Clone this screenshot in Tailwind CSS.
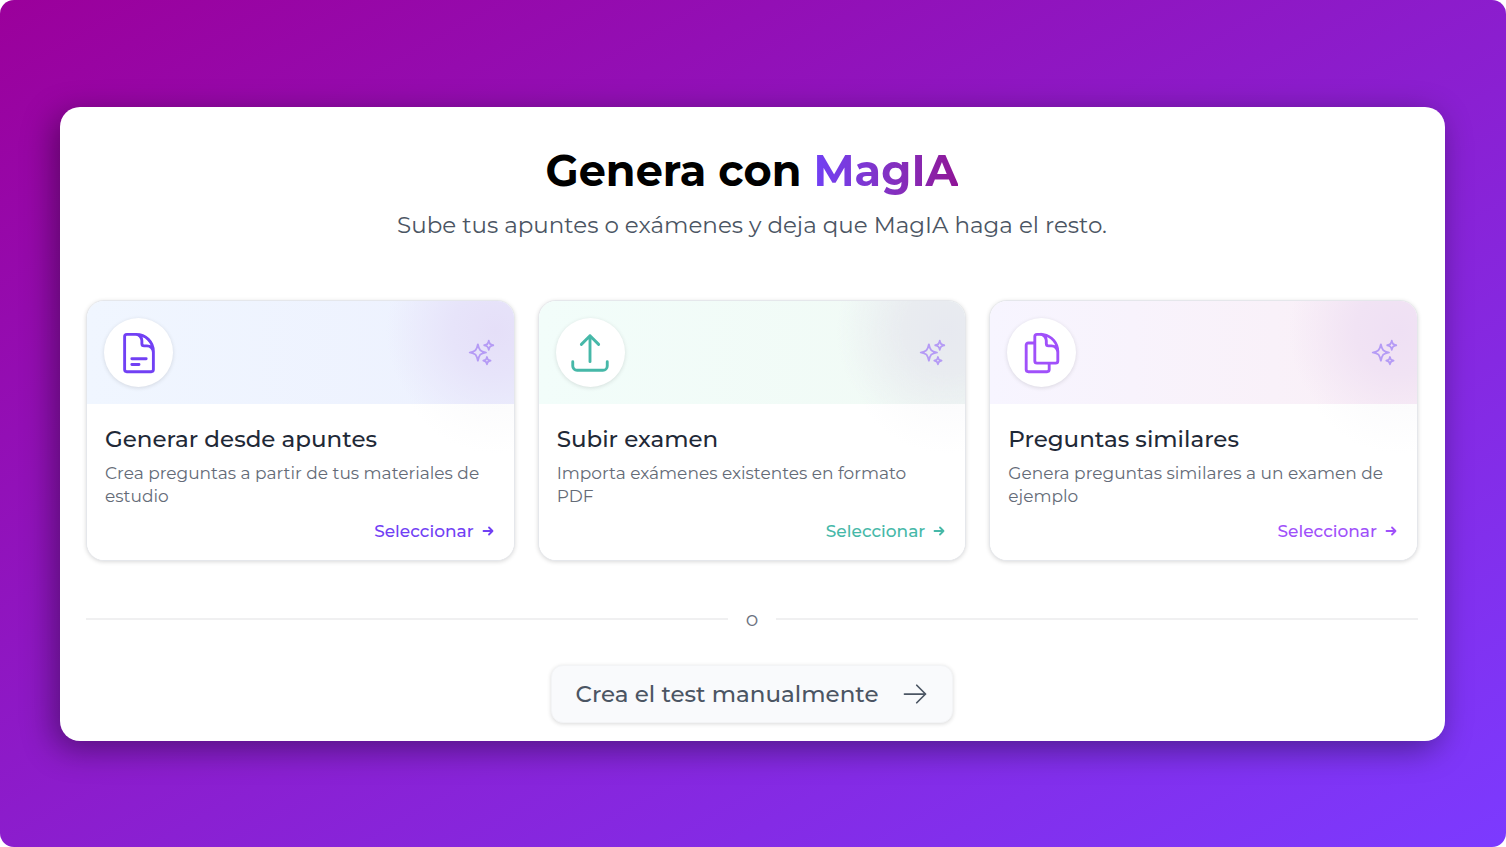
<!DOCTYPE html>
<html lang="es">
<head>
<meta charset="utf-8">
<meta name="viewport" content="width=device-width, initial-scale=1">
<title>Genera con MagIA</title>
<script src="https://cdn.jsdelivr.net/npm/@tailwindcss/browser@4"></script>
</head>
<body class="bg-white font-[Montserrat,Inter,sans-serif]">
<svg class="hidden" aria-hidden="true">
  <symbol id="sparkles" viewBox="0 0 24 24"><path d="M9.813 15.904 9 18.75l-.813-2.846a4.5 4.5 0 0 0-3.09-3.09L2.25 12l2.846-.813a4.5 4.5 0 0 0 3.09-3.09L9 5.25l.813 2.846a4.5 4.5 0 0 0 3.09 3.09L15.75 12l-2.846.813a4.5 4.5 0 0 0-3.09 3.09ZM18.259 8.715 18 9.75l-.259-1.035a3.375 3.375 0 0 0-2.455-2.456L14.25 6l1.036-.259a3.375 3.375 0 0 0 2.455-2.456L18 2.25l.259 1.035a3.375 3.375 0 0 0 2.456 2.456L21.75 6l-1.035.259a3.375 3.375 0 0 0-2.456 2.456ZM16.894 20.567 16.5 21.75l-.394-1.183a2.25 2.25 0 0 0-1.423-1.423L13.5 18.75l1.183-.394a2.25 2.25 0 0 0 1.423-1.423l.394-1.183.394 1.183a2.25 2.25 0 0 0 1.423 1.423l1.183.394-1.183.394a2.25 2.25 0 0 0-1.423 1.423Z"/></symbol>
  <symbol id="arrow" viewBox="0 0 24 24"><path d="M13.5 4.5 21 12m0 0-7.5 7.5M21 12H3"/></symbol>
  <symbol id="short-arrow" viewBox="0 0 12 12"><path d="M1.500 6h9M7 2.500 10.500 6 7 9.500"/></symbol>
</svg>
<div class="flex min-h-screen items-center rounded-[14px] bg-[linear-gradient(to_bottom_right,#9b009b,#7c3aff)] pt-[107px] pr-[61px] pb-[106px] pl-[60px]">
  <main class="w-full rounded-[20px] bg-white pt-[40px] pr-[27px] pb-[18px] pl-[26px] shadow-[-6px_8px_32px_rgba(0,0,0,0.4)]">
    <header class="text-center">
      <h1 class="text-[43px] leading-[48px] font-bold text-black">Genera con <span class="bg-linear-to-r from-[#7140f4] to-[#8f1397] bg-clip-text text-transparent">MagIA</span></h1>
      <p class="mt-[16px] text-[23px] leading-[28px] text-[#4b5563]">Sube tus apuntes o exámenes y deja que MagIA haga el resto.</p>
    </header>

    <section class="mt-[61px] grid grid-cols-3 gap-[23px]">
      <article class="overflow-hidden rounded-[18px] border border-gray-200 bg-white shadow-[0_1px_4px_rgba(0,0,0,0.15)]">
        <div class="flex h-[103px] items-center justify-between bg-[radial-gradient(circle_110px_at_calc(100%-18px)_30px,#e5dff8,#e7e4fa_40%,#e5dff800),linear-gradient(to_right,#f0f6ff,#edf1fe)] pr-[18px] pl-[17px]">
          <span class="flex size-[69px] items-center justify-center rounded-full bg-white shadow-[0_1px_4px_rgba(0,0,0,0.12)]"><svg class="size-[46px] fill-none stroke-[#7140f4] stroke-[1.5]" viewBox="0 0 24 24" stroke-linecap="round" stroke-linejoin="round" aria-hidden="true"><path d="M19.5 14.25v-2.625a3.375 3.375 0 0 0-3.375-3.375h-1.5A1.125 1.125 0 0 1 13.5 7.125v-1.5a3.375 3.375 0 0 0-3.375-3.375H8.25m0 12.75h7.5m-7.5 3H12M10.5 2.25H5.625c-.621 0-1.125.504-1.125 1.125v17.25c0 .621.504 1.125 1.125 1.125h12.75c.621 0 1.125-.504 1.125-1.125V11.25a9 9 0 0 0-9-9Z"/></svg></span>
          <svg class="size-[29px] fill-none stroke-[#b59bf5] stroke-[1.5]" stroke-linejoin="round" aria-hidden="true"><use href="#sparkles"/></svg>
        </div>
        <div class="bg-[radial-gradient(circle_100px_at_calc(100%-18px)_-50px,#f8f8fa,#ffffff)] px-[18px] pt-[21px] pb-[17px]">
          <h2 class="text-[23px] leading-[29px] font-medium text-[#1f2937]">Generar desde apuntes</h2>
          <p class="mt-[8px] pr-[8px] text-[17px] leading-[23px] text-[#646b77]">Crea preguntas a partir de tus materiales de estudio</p>
          <button type="button" class="mt-[11px] ml-auto flex items-center gap-[8px] pr-[2px] text-[17px] leading-[24px] font-medium text-[#7140f4]">Seleccionar <svg class="size-[12px] fill-none stroke-current stroke-[1.8]" stroke-linecap="round" stroke-linejoin="round" aria-hidden="true"><use href="#short-arrow"/></svg></button>
        </div>
      </article>

      <article class="overflow-hidden rounded-[18px] border border-gray-200 bg-white shadow-[0_1px_4px_rgba(0,0,0,0.15)]">
        <div class="flex h-[103px] items-center justify-between bg-[radial-gradient(circle_110px_at_calc(100%-18px)_30px,#e7e9f0,#e9ecf0_40%,#e7e9f000),linear-gradient(to_right,#f2fdfa,#f1faf5)] pr-[18px] pl-[17px]">
          <span class="flex size-[69px] items-center justify-center rounded-full bg-white shadow-[0_1px_4px_rgba(0,0,0,0.12)]"><svg class="size-[46px] fill-none stroke-[#46b8a8] stroke-[1.5]" viewBox="0 0 24 24" stroke-linecap="round" stroke-linejoin="round" aria-hidden="true"><path d="M3 16.5v2.25A2.25 2.25 0 0 0 5.25 21h13.5A2.25 2.25 0 0 0 21 18.75V16.5m-13.5-9L12 3m0 0 4.5 4.5M12 3v13.5"/></svg></span>
          <svg class="size-[29px] fill-none stroke-[#b59bf5] stroke-[1.5]" stroke-linejoin="round" aria-hidden="true"><use href="#sparkles"/></svg>
        </div>
        <div class="bg-[radial-gradient(circle_100px_at_calc(100%-18px)_-50px,#f8f8fa,#ffffff)] px-[18px] pt-[21px] pb-[17px]">
          <h2 class="text-[23px] leading-[29px] font-medium text-[#1f2937]">Subir examen</h2>
          <p class="mt-[8px] pr-[8px] text-[17px] leading-[23px] text-[#646b77]">Importa exámenes existentes en formato PDF</p>
          <button type="button" class="mt-[11px] ml-auto flex items-center gap-[8px] pr-[2px] text-[17px] leading-[24px] font-medium text-[#46b8a8]">Seleccionar <svg class="size-[12px] fill-none stroke-current stroke-[1.8]" stroke-linecap="round" stroke-linejoin="round" aria-hidden="true"><use href="#short-arrow"/></svg></button>
        </div>
      </article>

      <article class="overflow-hidden rounded-[18px] border border-gray-200 bg-white shadow-[0_1px_4px_rgba(0,0,0,0.15)]">
        <div class="flex h-[103px] items-center justify-between bg-[radial-gradient(circle_110px_at_calc(100%-18px)_30px,#efe0f4,#f1e3f4_40%,#f5e6f400),linear-gradient(to_right,#f7f5ff,#faeff6)] pr-[18px] pl-[17px]">
          <span class="flex size-[69px] items-center justify-center rounded-full bg-white shadow-[0_1px_4px_rgba(0,0,0,0.12)]"><svg class="size-[46px] fill-none stroke-[#a050fa] stroke-[1.5]" viewBox="0 0 24 24" stroke-linecap="round" stroke-linejoin="round" aria-hidden="true"><path d="M15.75 17.25v3.375c0 .621-.504 1.125-1.125 1.125h-9.75a1.125 1.125 0 0 1-1.125-1.125V7.875c0-.621.504-1.125 1.125-1.125H6.75a9.06 9.06 0 0 1 1.5.124m7.5 10.376h3.375c.621 0 1.125-.504 1.125-1.125V11.25c0-4.46-3.243-8.161-7.5-8.876a9.06 9.06 0 0 0-1.5-.124H9.375c-.621 0-1.125.504-1.125 1.125v3.5m7.5 10.375H9.375a1.125 1.125 0 0 1-1.125-1.125v-9.25m12 6.625v-1.875a3.375 3.375 0 0 0-3.375-3.375h-1.5a1.125 1.125 0 0 1-1.125-1.125v-1.5a3.375 3.375 0 0 0-3.375-3.375H9.75"/></svg></span>
          <svg class="size-[29px] fill-none stroke-[#b59bf5] stroke-[1.5]" stroke-linejoin="round" aria-hidden="true"><use href="#sparkles"/></svg>
        </div>
        <div class="bg-[radial-gradient(circle_100px_at_calc(100%-18px)_-50px,#f8f8fa,#ffffff)] px-[18px] pt-[21px] pb-[17px]">
          <h2 class="text-[23px] leading-[29px] font-medium text-[#1f2937]">Preguntas similares</h2>
          <p class="mt-[8px] pr-[8px] text-[17px] leading-[23px] text-[#646b77]">Genera preguntas similares a un examen de ejemplo</p>
          <button type="button" class="mt-[11px] ml-auto flex items-center gap-[8px] pr-[2px] text-[17px] leading-[24px] font-medium text-[#a050fa]">Seleccionar <svg class="size-[12px] fill-none stroke-current stroke-[1.8]" stroke-linecap="round" stroke-linejoin="round" aria-hidden="true"><use href="#short-arrow"/></svg></button>
        </div>
      </article>
    </section>

    <div class="mt-[46px] flex items-center gap-[18px] text-[20px] leading-[24px] text-[#6b7280]">
      <span class="h-[2px] flex-1 bg-[#f0f0f1]"></span>o<span class="h-[2px] flex-1 bg-[#f0f0f1]"></span>
    </div>

    <button type="button" class="mx-auto mt-[34px] flex h-[58px] items-center gap-[22px] rounded-[12px] border border-gray-100 bg-[#f9fafc] px-[23px] text-[23px] leading-[28px] font-medium text-[#4b5563] shadow-[0_1px_4px_rgba(0,0,0,0.15)]">Crea el test manualmente <svg class="size-[28px] fill-none stroke-current stroke-[1.5]" stroke-linecap="round" stroke-linejoin="round" aria-hidden="true"><use href="#arrow"/></svg></button>
  </main>
</div>
</body>
</html>
